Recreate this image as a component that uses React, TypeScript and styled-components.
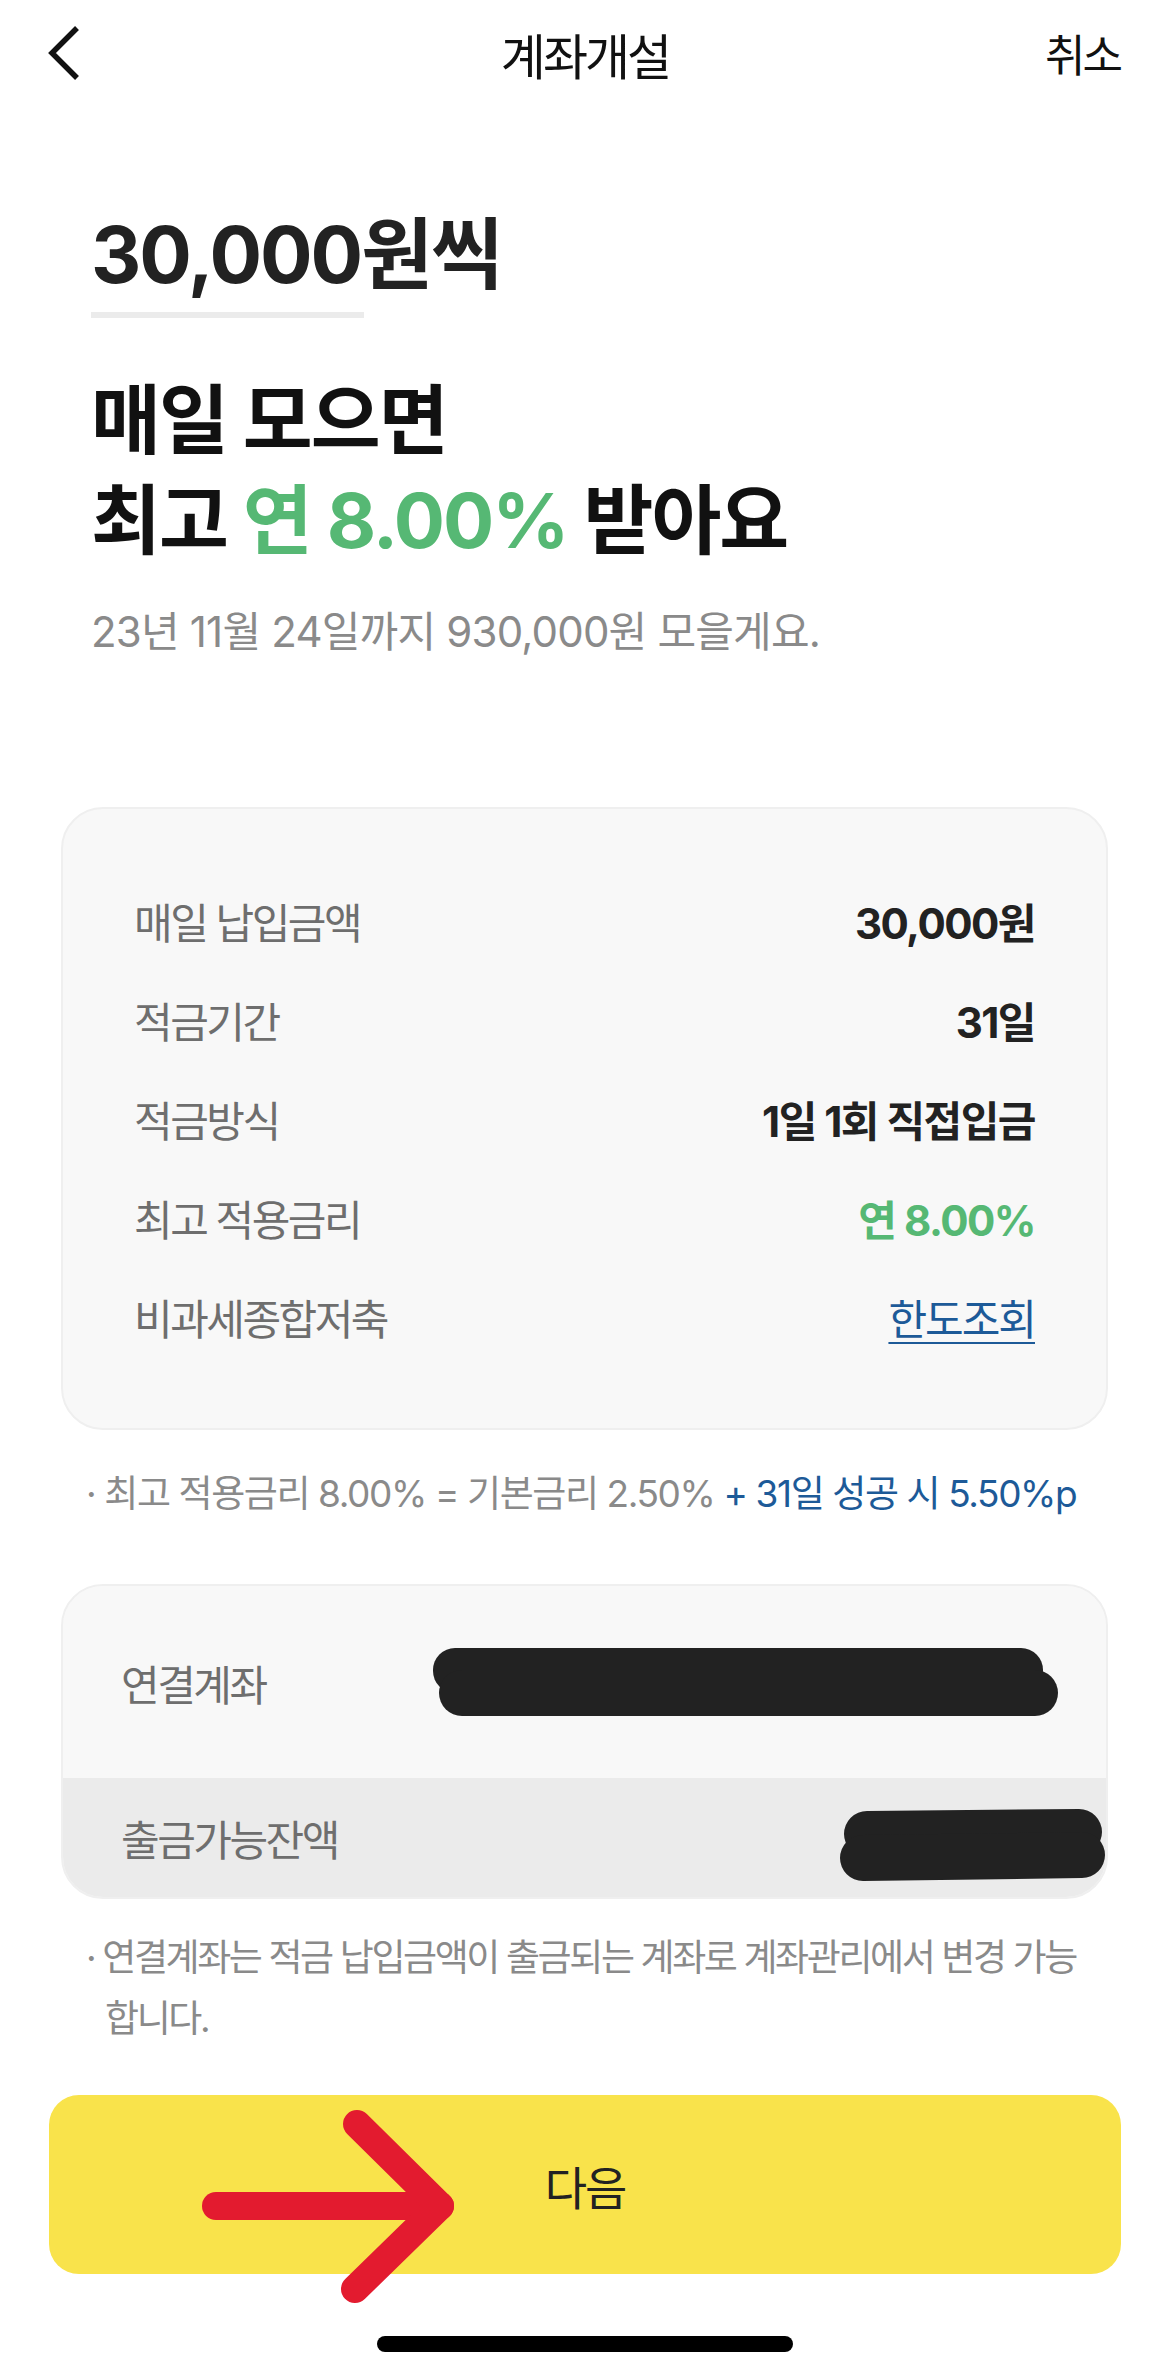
import React from "react";
import styled, { createGlobalStyle } from "styled-components";

const Global = createGlobalStyle`
  html, body { margin: 0; padding: 0; background: #ffffff; }
  body { font-family: "Inter", "Noto Sans CJK KR", sans-serif; color: #111; }
  * { box-sizing: border-box; }
`;

const Page = styled.div`
  width: 1170px;
  min-height: 2378px;
  display: flex;
  flex-direction: column;
  background: #fff;
`;

const NavBar = styled.header`
  height: 106px;
  padding: 0 50px;
  display: grid;
  grid-template-columns: 1fr auto 1fr;
  align-items: center;
`;

const BackButton = styled.button`
  justify-self: start;
  margin-left: -4px;
  border: 0;
  background: none;
  padding: 0;
  display: flex;
  align-items: center;
  cursor: pointer;
`;

const NavTitle = styled.h1`
  margin: 0;
  font-size: 49px;
  font-weight: 400;
  letter-spacing: -3px;
  color: #111;
`;

const NavAction = styled.button`
  justify-self: end;
  border: 0;
  background: none;
  padding: 0;
  font-family: inherit;
  font-size: 44px;
  letter-spacing: -3px;
  color: #111;
`;

const Hero = styled.section`
  padding: 0 91px;
  margin-top: 104px;
  display: flex;
  flex-direction: column;
`;

const Amount = styled.div`
  font-size: 78px;
  line-height: 90px;
  font-weight: 700;
  color: #222;
  letter-spacing: -2px;
`;

const AmountLine = styled.div`
  margin-top: 12px;
  width: 273px;
  height: 6px;
  background: #ebebeb;
`;

const Headline = styled.h2`
  margin: 52px 0 0;
  font-size: 76px;
  line-height: 100px;
  font-weight: 700;
  color: #111;
  letter-spacing: -2px;
`;

const Accent = styled.span`
  color: #56b874;
`;

const Sub = styled.p`
  margin: 37px 0 0;
  font-size: 42px;
  line-height: 50px;
  color: #8a8a8a;
  letter-spacing: -0.8px;
`;

const Card = styled.div<{ $flush?: boolean }>`
  margin: 0 62px 0 61px;
  background: #f8f8f8;
  border: 2px solid #efefef;
  border-radius: 42px;
  overflow: hidden;
  display: flex;
  flex-direction: column;
  padding: ${(p) => (p.$flush ? "0" : "62px 71px")};
`;

const SummaryCard = styled(Card)`
  margin-top: 150px;
`;

const InfoRow = styled.div`
  height: 99px;
  display: flex;
  align-items: center;
  justify-content: space-between;
`;

const Label = styled.span`
  font-size: 42px;
  color: #6e6e6e;
  letter-spacing: -2.5px;
`;

const Value = styled.span<{ $tone?: "green" | "dark" }>`
  font-size: 42px;
  font-weight: 700;
  letter-spacing: -1.5px;
  color: ${(p) => (p.$tone === "green" ? "#56b874" : "#222")};
`;

const LinkValue = styled.a`
  font-size: 42px;
  color: #1d5a98;
  letter-spacing: -2px;
  text-decoration: underline;
  text-underline-offset: 7px;
  text-decoration-thickness: 2px;
`;

const Note = styled.p<{ $top: number; $spacing: number }>`
  margin: ${(p) => p.$top}px 36px 0 86px;
  padding-left: 19px;
  text-indent: -19px;
  font-size: 37px;
  line-height: 61px;
  color: #8a8a8a;
  letter-spacing: ${(p) => p.$spacing}px;
  word-break: keep-all;
`;

const NoteBlue = styled.span`
  color: #1d5a98;
`;

const AccountCard = styled(Card)`
  margin-top: 60px;
`;

const AccountRow = styled.div<{ $height: number; $shade?: boolean }>`
  height: ${(p) => p.$height}px;
  background: ${(p) => (p.$shade ? "#ebebeb" : "#f8f8f8")};
  display: flex;
  align-items: center;
  justify-content: space-between;
  padding: 0 0 0 58px;
`;

const AccountLabel = styled.span`
  font-size: 42px;
  color: #6e6e6e;
  letter-spacing: -2.5px;
`;

const Redact = styled.svg<{ $inset: number }>`
  display: block;
  margin-right: ${(p) => p.$inset}px;
`;

const NextButton = styled.button`
  position: relative;
  margin: 46px 49px 0 49px;
  height: 179px;
  border: 0;
  border-radius: 30px;
  background: #f9e34b;
  font-family: inherit;
  font-size: 46px;
  color: #222;
  letter-spacing: -2px;
  display: flex;
  align-items: center;
  justify-content: center;
  overflow: visible;
`;

const ArrowMark = styled.svg`
  position: absolute;
  left: 0;
  top: 0;
  pointer-events: none;
  overflow: visible;
`;

const HomeBar = styled.div`
  margin: 62px auto 0;
  width: 416px;
  height: 16px;
  border-radius: 8px;
  background: #000;
`;

const rows: { label: string; value: string; tone?: "green" | "dark"; link?: boolean }[] = [
  { label: "매일 납입금액", value: "30,000원" },
  { label: "적금기간", value: "31일" },
  { label: "적금방식", value: "1일 1회 직접입금" },
  { label: "최고 적용금리", value: "연 8.00%", tone: "green" },
  { label: "비과세종합저축", value: "한도조회", link: true },
];

export default function App() {
  return (
    <Page>
      <Global />
      <NavBar>
        <BackButton aria-label="뒤로">
          <svg width="34" height="56" viewBox="0 0 34 56">
            <path d="M31 3 L6 28 L31 53" fill="none" stroke="#111" strokeWidth="5.5" strokeLinecap="butt" strokeLinejoin="miter" />
          </svg>
        </BackButton>
        <NavTitle>계좌개설</NavTitle>
        <NavAction>취소</NavAction>
      </NavBar>

      <Hero>
        <Amount>30,000원씩</Amount>
        <AmountLine />
        <Headline>
          매일 모으면
          <br />
          최고 <Accent>연 8.00%</Accent> 받아요
        </Headline>
        <Sub>23년 11월 24일까지 930,000원 모을게요.</Sub>
      </Hero>

      <SummaryCard>
        {rows.map((r) => (
          <InfoRow key={r.label}>
            <Label>{r.label}</Label>
            {r.link ? <LinkValue>{r.value}</LinkValue> : <Value $tone={r.tone}>{r.value}</Value>}
          </InfoRow>
        ))}
      </SummaryCard>

      <Note $top={33} $spacing={-1.4}>
        · 최고 적용금리 8.00% = 기본금리 2.50% <NoteBlue>+ 31일 성공 시 5.50%p</NoteBlue>
      </Note>

      <AccountCard $flush>
        <AccountRow $height={192}>
          <AccountLabel>연결계좌</AccountLabel>
          <Redact $inset={47} width="626" height="70" viewBox="0 0 626 70">
            <rect x="0" y="1" width="610" height="45" rx="22" fill="#222" />
            <rect x="6" y="23" width="619" height="46" rx="23" fill="#222" />
          </Redact>
        </AccountRow>
        <AccountRow $height={119} $shade>
          <AccountLabel>출금가능잔액</AccountLabel>
          <Redact $inset={0} width="266" height="86" viewBox="0 0 266 86">
            <path d="M27 16 L239 14 A23 23 0 0 1 239 60 L27 62 A23 23 0 0 1 27 16 Z" fill="#222" />
            <path d="M23 40 L242 37 A23 23 0 0 1 242 83 L23 86 A22 22 0 0 1 23 40 Z" fill="#222" />
          </Redact>
        </AccountRow>
      </AccountCard>

      <Note $top={28} $spacing={-2.4}>· 연결계좌는 적금 납입금액이 출금되는 계좌로 계좌관리에서 변경 가능 합니다.</Note>

      <NextButton>
        다음
        <ArrowMark width="420" height="220" viewBox="0 0 420 220">
          <g fill="none" stroke="#e31b2f" strokeWidth="28" strokeLinecap="round" strokeLinejoin="round">
            <path d="M167 111 L391 111" />
            <path d="M308 29 L391 111 L306 194" />
          </g>
        </ArrowMark>
      </NextButton>

      <HomeBar />
    </Page>
  );
}
